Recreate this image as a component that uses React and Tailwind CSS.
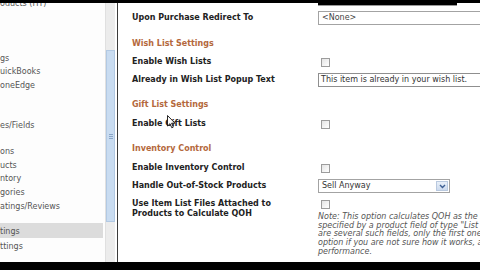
const labelCls = "w-[186px] shrink-0 font-bold text-[8px] text-[#222] whitespace-nowrap";
const headCls = "font-bold text-[8px] text-[#b4683c] whitespace-nowrap";

function Checkbox() {
  return (
    <div className="ml-[3px] w-[9px] h-[9px] border border-[#9c9c9c] bg-gradient-to-br from-[#e4e4e4] to-white" />
  );
}

function SideItem({ children, className = "" }) {
  return (
    <div className={`h-[13px] leading-[13px] text-[8px] text-[#555] whitespace-nowrap ${className}`}>
      {children}
    </div>
  );
}

function Sidebar() {
  return (
    <div className="w-[105px] shrink-0 overflow-hidden flex flex-col bg-[#fdfdfd]">
      <SideItem className="-mt-[6px]">oducts (HT)</SideItem>
      <SideItem className="mt-[42px]">gs</SideItem>
      <SideItem>uickBooks</SideItem>
      <SideItem className="mt-[1px]">oneEdge</SideItem>
      <SideItem className="mt-[27px]">es/Fields</SideItem>
      <SideItem className="mt-[13px]">ons</SideItem>
      <SideItem className="mt-[1px]">ucts</SideItem>
      <SideItem>ntory</SideItem>
      <SideItem className="mt-[1px]">gories</SideItem>
      <SideItem className="mt-[1px]">atings/Reviews</SideItem>
      <div className="mt-[10px] mr-[2px] h-[15px] leading-[15px] pt-[1px] bg-[#dcdcdc] text-[8px] text-[#555]">
        tings
      </div>
      <SideItem className="mt-[2px]">ttings</SideItem>
    </div>
  );
}

function Scrollbar() {
  return (
    <div className="w-[10px] shrink-0 flex flex-col bg-[#ececec] border-l border-[#e0e0e0]">
      <div className="h-[47px]" />
      <div className="h-[172px] bg-[#c9dcf1] border border-[#b2c9e3] flex flex-col items-center justify-center gap-[1px]">
        <div className="w-[4px] h-px bg-[#8aa6c8]" />
        <div className="w-[4px] h-px bg-[#8aa6c8]" />
        <div className="w-[4px] h-px bg-[#8aa6c8]" />
      </div>
    </div>
  );
}

function Row({ label, children, className = "", h = "h-[14px]" }) {
  return (
    <div className={`flex items-center ${h} ${className}`}>
      <div className={labelCls}>{label}</div>
      {children}
    </div>
  );
}

function Cursor() {
  return (
    <svg className="absolute left-[49px] top-[112px]" width="9" height="14" viewBox="0 0 9 14">
      <path d="M0.5 0.5 L0.5 11 L3 8.7 L4.8 12.8 L6.3 12.1 L4.6 8.2 L8 8.2 Z" fill="#fff" stroke="#111" strokeWidth="0.9" strokeLinejoin="round" />
    </svg>
  );
}

function Content() {
  return (
    <div className="relative flex-1 overflow-hidden bg-white flex flex-col pl-[14px] text-[8px]">
      <div className="flex">
        <div className="w-[186px]" />
        <div className="w-[139px]">
          <div className="h-[2px] bg-black" />
          <div className="h-px bg-[#9a9a9a]" />
        </div>
      </div>
      <Row label="Upon Purchase Redirect To" className="mt-[4px]" h="h-[16px]">
        <div className="w-[170px] shrink-0 h-[14px] border border-[#a3a3a3] bg-white pl-[3px] leading-[12px] text-[#444]">
          &lt;None&gt;
        </div>
      </Row>
      <div className={`${headCls} mt-[11px] h-[14px] leading-[14px]`}>Wish List Settings</div>
      <Row label="Enable Wish Lists" className="mt-[4px]">
        <Checkbox />
      </Row>
      <Row label="Already in Wish List Popup Text" className="mt-[4px]">
        <div className="w-[170px] shrink-0 h-[14px] border border-[#8f8f8f] bg-white pl-[2px] leading-[12px] text-[#333] whitespace-nowrap">
          This item is already in your wish list.
        </div>
      </Row>
      <div className={`${headCls} mt-[11px] h-[14px] leading-[14px]`}>Gift List Settings</div>
      <Row label="Enable Gift Lists" className="mt-[5px]">
        <Checkbox />
      </Row>
      <div className={`${headCls} mt-[11px] h-[14px] leading-[14px]`}>Inventory Control</div>
      <Row label="Enable Inventory Control" className="mt-[5px]">
        <Checkbox />
      </Row>
      <Row label="Handle Out-of-Stock Products" className="mt-[4px]">
        <div className="w-[132px] shrink-0 h-[14px] border border-[#a3a3a3] bg-white flex items-stretch">
          <div className="flex-1 pl-[3px] leading-[12px] text-[#333]">Sell Anyway</div>
          <div className="w-[12px] m-px bg-gradient-to-b from-[#e9f0f9] to-[#ccdaee] border border-[#b9c9df] flex items-center justify-center">
            <svg width="7" height="5" viewBox="0 0 7 5">
              <path d="M1 1 L3.5 3.5 L6 1" fill="none" stroke="#3d5f93" strokeWidth="1.4" />
            </svg>
          </div>
        </div>
      </Row>
      <div className="flex mt-[5px]">
        <div className={`${labelCls} leading-[10px] pt-[1px]`}>
          Use Item List Files Attached to
          <br />
          Products to Calculate QOH
        </div>
        <div className="flex flex-col">
          <div className="mt-[2px]">
            <Checkbox />
          </div>
          <div className="mt-[4px] italic text-[8px] leading-[8.7px] text-[#555] whitespace-nowrap">
            <div>Note: This option calculates QOH as the sum of quantities</div>
            <div>specified by a product field of type "List File". If there</div>
            <div>are several such fields, only the first one is used. Disable this</div>
            <div>option if you are not sure how it works, as it may affect</div>
            <div>performance.</div>
          </div>
        </div>
      </div>
      <Cursor />
    </div>
  );
}

export default function App() {
  return (
    <div className="w-[480px] h-[270px] bg-black flex flex-col overflow-hidden font-['DejaVu_Sans',sans-serif]">
      <div className="h-[3px] shrink-0" />
      <div className="flex h-[259px] shrink-0 bg-white">
        <Sidebar />
        <Scrollbar />
        <div className="w-[2px] shrink-0" />
        <div className="w-px shrink-0 bg-[#3a3a3a]" />
        <Content />
      </div>
    </div>
  );
}
